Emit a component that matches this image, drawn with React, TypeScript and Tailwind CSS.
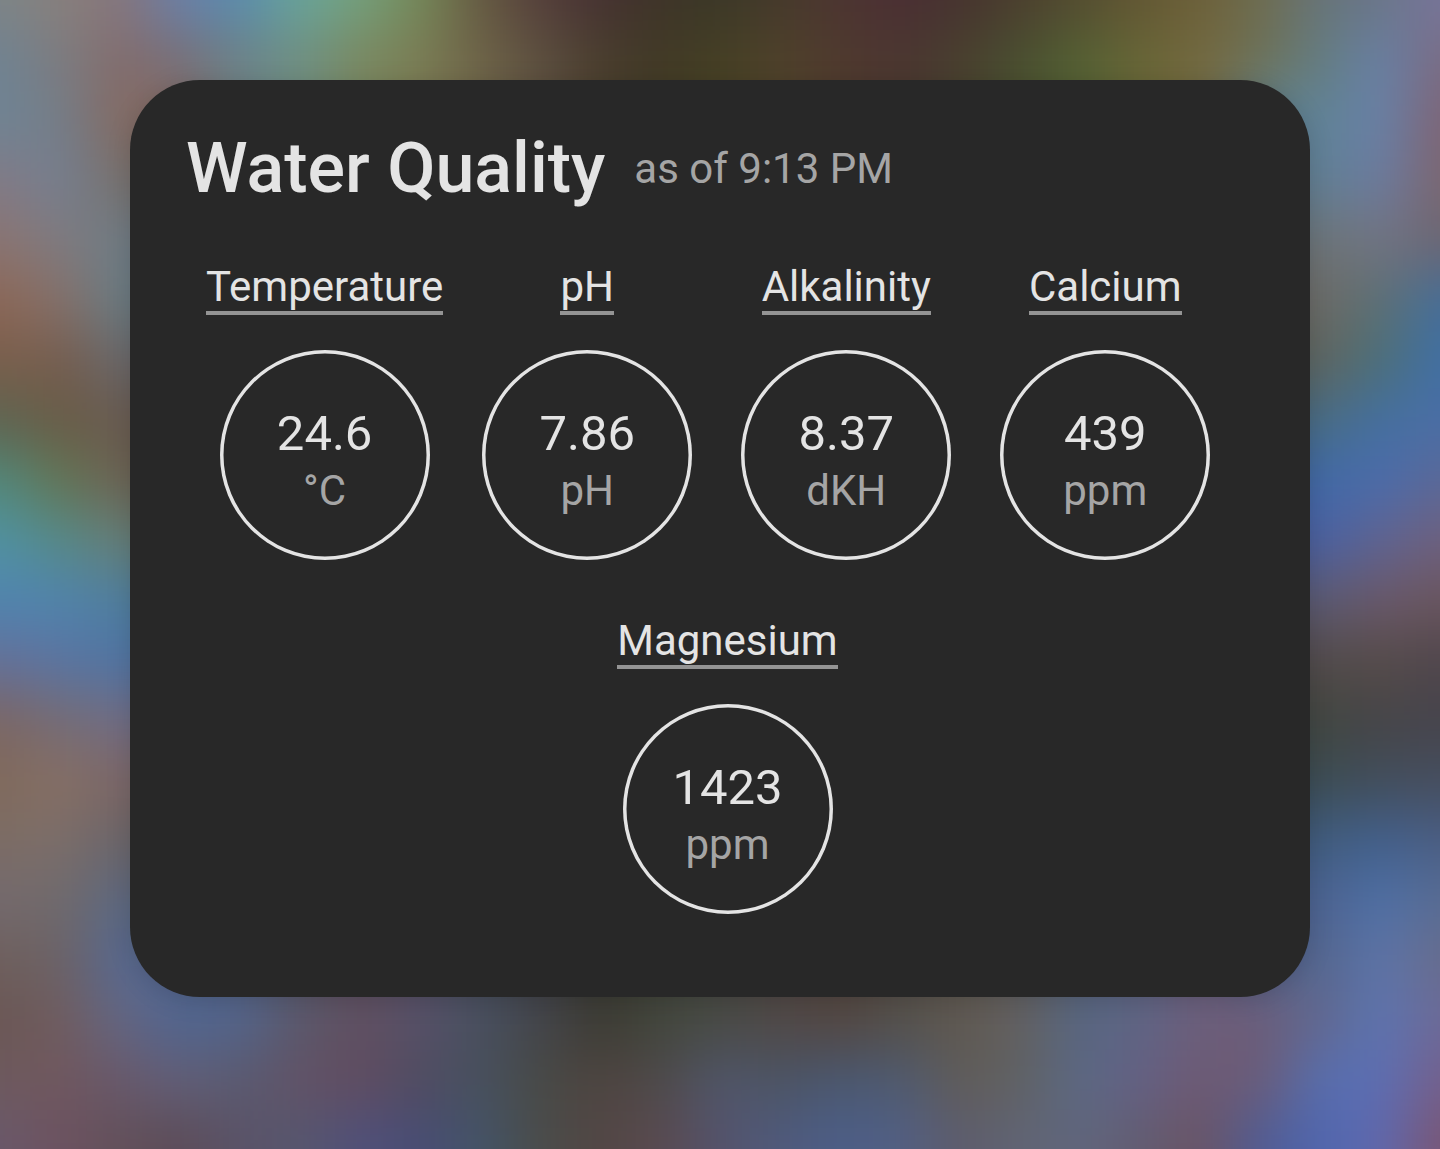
import React from "react";

type Reading = {
  name: string;
  value: string;
  unit: string;
};

const mainReadings: Reading[] = [
  { name: "Temperature", value: "24.6", unit: "°C" },
  { name: "pH", value: "7.86", unit: "pH" },
  { name: "Alkalinity", value: "8.37", unit: "dKH" },
  { name: "Calcium", value: "439", unit: "ppm" },
];

const extraReadings: Reading[] = [
  { name: "Magnesium", value: "1423", unit: "ppm" },
];

// Backdrop colours, sampled every 60px. The middle is hidden by the card.
const STEP = 60;

const topColors = [
  "7d8587 88807c 86757c 6a7fa8 5a8cae 68a49a 74a07c 758858 665a42 553f3b 463232 3e3428 3b3827 463a2b 4d3531 4b2f34 47332f 4b3f2f 544d30 625733 6c6039 6e6c4f 677478 6a7689 77759a",
  "6f8292 7c7c80 836c6c 786f78 6c8288 6f8f82 7a8860 7b7c54 6e6448 5d5040 4a3e2e 413a26 464024 4f422b 4f3a2e 4b3631 48402f 4a5030 546234 686637 74693f 6d7258 647d80 6780a5 7a6c84",
];

const leftColors = [
  "6f8494 747d88 846a62",
  "827a86 757f90 76706c",
  "8a7472 7f7b80 6f7b84",
  "8c6756 85706a 697b82",
  "7a5e4c 765d4e 69676a",
  "5e6450 6a5c46 685a50",
  "52887a 637654 6c6253",
  "5092a2 558a88 667e76",
  "5084b0 5084ac 4f7e9e",
  "64709a 5a74a2 4f74a4",
  "7c6664 756c76 706c84",
  "806a5c 866f64 7c6666",
  "7c6c64 7c6e6a 6a6468",
  "746a6e 706a6c 5c6880",
  "6e5f5c 6c6266 566890",
];

const rightColors = [
  "5f8296 6881a8 7e6476",
  "617f94 6b7ba0 7c6670",
  "6c7478 727482 6c6672",
  "6c6a66 5d7074 466e98",
  "5e645e 4c7078 406fa4",
  "486c82 4470a0 4a6ea6",
  "4069a6 4b6cac 5a6898",
  "4a60a2 5f6492 6f607e",
  "5c5a72 6a586a 6a565e",
  "524a4a 564c4a 50464c",
  "414640 464548 46444c",
  "3c4c52 424e5c 464e5e",
  "405c7e 42608c 4a5e84",
  "4c6290 4e70a6 586c94",
  "54668e 5d74a8 686c8c",
];

const bottomColors = [
  "6a5654 705c5e 646682 4f6590 53648a 5a586a 604f60 565068 48505f 43444a 3b3a32 42463c 484a44 504846 534640 54504a 5f5850 626060 576680 5e6484 6c5e7a 6c5c78 62688e 5c74b0 6c6a98",
  "6e5a5e 70575e 68586a 625f78 5a5a70 625266 604c60 504c62 47505e 484a46 4e4440 4e4a4a 50566a 4c5464 4a5870 4f5a70 605c58 606264 5b6884 646084 6e5a74 6a5c78 566eae 5c6eb4 74608c",
  "69586a 6c5260 62505a 5c4c58 5a5368 56566e 50507a 484c74 435468 4a4c4a 524644 5a4a50 54536c 4f5a7c 4c5e88 515f84 5e5c6c 606474 60667c 625c72 6a5464 505c94 5066ae 5f68ae 7a5674",
];

type BandProps = {
  rows: string[];
  col?: number;
  row?: number;
};

function Band({ rows, col = 0, row = 0 }: BandProps) {
  return (
    <>
      {rows.map((line, r) =>
        line.split(" ").map((color, c) => {
          const x = col + c;
          const y = row + r;
          // stretch the cells that touch the page border or slip under the card
          const left = x === 0 ? 90 : x === 22 && row === 2 ? 90 : 30;
          const right = x === 24 ? 90 : x === 2 && row === 2 ? 90 : 30;
          const top = y === 0 || y === 17 ? 90 : 30;
          const bottom = y === 19 || y === 1 ? 90 : 30;
          return (
            <rect
              key={`${x}-${y}`}
              x={x * STEP - left}
              y={y * STEP - top}
              width={left + right + 1}
              height={top + bottom + 1}
              fill={`#${color}`}
            />
          );
        }),
      )}
    </>
  );
}

function Backdrop() {
  return (
    <svg
      className="absolute inset-0 h-full w-full"
      viewBox="0 0 1440 1149"
      preserveAspectRatio="none"
      aria-hidden="true"
    >
      <defs>
        <filter
          id="soften"
          filterUnits="userSpaceOnUse"
          x="-90"
          y="-90"
          width="1620"
          height="1329"
          colorInterpolationFilters="sRGB"
        >
          <feGaussianBlur stdDeviation="27" />
        </filter>
      </defs>
      <g filter="url(#soften)">
        <Band rows={topColors} />
        <Band rows={bottomColors} row={17} />
        <Band rows={leftColors} row={2} />
        <Band rows={rightColors} row={2} col={22} />
      </g>
    </svg>
  );
}

function ReadingDial({ name, value, unit }: Reading) {
  return (
    <div className="flex min-w-[230px] flex-col items-center">
      <h3 className="h-[53px] border-b-4 border-[#949494] text-[42px] leading-[50px]">
        {name}
      </h3>
      <div className="mt-[35px] flex h-[210px] w-[210px] flex-col items-center rounded-full pt-[55px] shadow-[inset_0_0_0_3.5px_#e4e4e4]">
        <span className="text-[49px] leading-[58px]">{value}</span>
        <span className="text-[42px] leading-[56px] text-[#a5a5a5]">
          {unit}
        </span>
      </div>
    </div>
  );
}

export default function App() {
  return (
    <main className="relative h-[1149px] w-[1440px] overflow-hidden px-[130px] pt-20 font-['Roboto',sans-serif] text-[#e4e4e4]">
      <Backdrop />

      <section className="relative h-[917px] rounded-[70px] bg-[#282828] pt-[46px] shadow-[0_4px_24px_rgba(0,0,0,0.15)]">
        <header className="flex items-center pl-14">
          <h1 className="text-[70px] leading-[84px] font-medium">
            Water Quality
          </h1>
          <span className="ml-[29px] pt-0.5 text-[42px] leading-[50px] text-[#a5a5a5]">
            as of 9:13 PM
          </span>
        </header>

        <div className="mt-[52px] flex gap-[29px] pl-[76px]">
          {mainReadings.map((reading) => (
            <ReadingDial key={reading.name} {...reading} />
          ))}
        </div>

        <div className="mt-[56px] flex justify-center pl-[15px]">
          {extraReadings.map((reading) => (
            <ReadingDial key={reading.name} {...reading} />
          ))}
        </div>
      </section>
    </main>
  );
}
